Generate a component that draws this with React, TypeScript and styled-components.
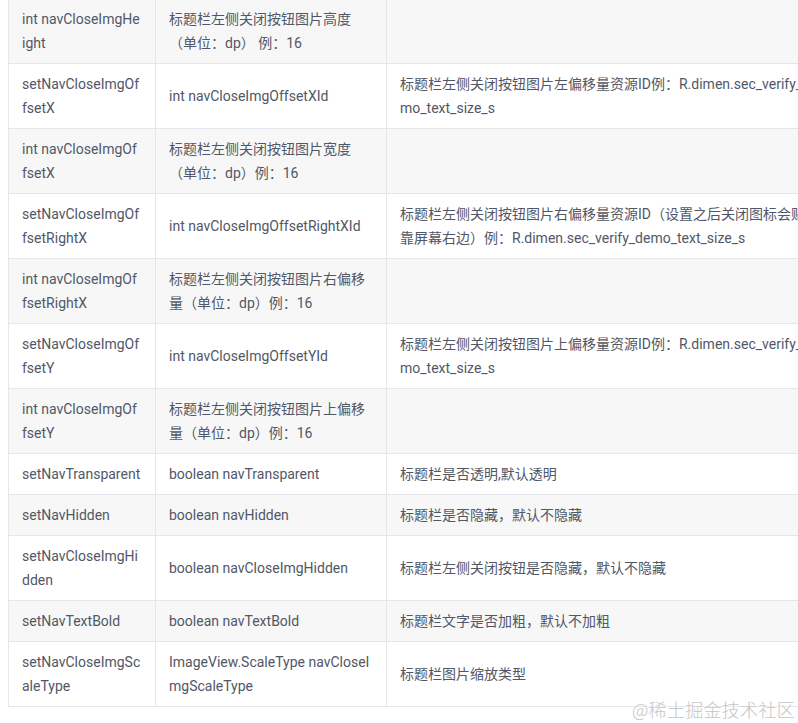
import React from "react";
import styled, { createGlobalStyle } from "styled-components";

const Global = createGlobalStyle`
  html, body {
    margin: 0;
    padding: 0;
    background: #ffffff;
    overflow: hidden;
  }
  body {
    font-family: Roboto, "Noto Sans CJK SC", sans-serif;
  }
`;

const Page = styled.div`
  position: relative;
  width: 798px;
  height: 723px;
  overflow: hidden;
  padding-left: 8px;
  box-sizing: border-box;
`;

const Table = styled.table`
  border-collapse: collapse;
  margin-top: -2px;
  table-layout: fixed;
  width: 826px;
  font-size: 14px;
  line-height: 24px;
  color: #515767;
`;

const Row = styled.tr`
  &:nth-child(odd) {
    background: #f7f7f7;
  }
`;

const Cell = styled.td<{ $w?: number; $pr?: number }>`
  box-sizing: border-box;
  border: 1px solid #e4e6eb;
  padding: 8px ${(p) => p.$pr ?? 13}px 8px 13px;
  vertical-align: middle;
  word-break: break-all;
  white-space: pre-line;
  ${(p) => (p.$w ? `width: ${p.$w}px;` : "")}
`;

const Watermark = styled.div`
  position: absolute;
  right: 3px;
  bottom: 1px;
  font-family: "Noto Sans CJK SC", sans-serif;
  font-size: 18px;
  font-weight: 300;
  color: #c6c6c6;
  letter-spacing: 0.3px;
  text-shadow: 0 0 2px #ffffff, 0 0 2px #ffffff;
`;

const rows: [string, string, string][] = [
  ["int navCloseImgHeight", "标题栏左侧关闭按钮图片高度（单位：dp） 例：16", ""],
  [
    "setNavCloseImgOffsetX",
    "int navCloseImgOffsetXId",
    "标题栏左侧关闭按钮图片左偏移量资源ID例：R.dimen.sec_verify_demo_text_size_s",
  ],
  ["int navCloseImgOffsetX", "标题栏左侧关闭按钮图片宽度（单位：dp）例：16", ""],
  [
    "setNavCloseImgOffsetRightX",
    "int navCloseImgOffsetRightXId",
    "标题栏左侧关闭按钮图片右偏移量资源ID（设置之后关闭图标会贴\n靠屏幕右边）例：R.dimen.sec_verify_demo_text_size_s",
  ],
  ["int navCloseImgOffsetRightX", "标题栏左侧关闭按钮图片右偏移量（单位：dp）例：16", ""],
  [
    "setNavCloseImgOffsetY",
    "int navCloseImgOffsetYId",
    "标题栏左侧关闭按钮图片上偏移量资源ID例：R.dimen.sec_verify_demo_text_size_s",
  ],
  ["int navCloseImgOffsetY", "标题栏左侧关闭按钮图片上偏移量（单位：dp）例：16", ""],
  ["setNavTransparent", "boolean navTransparent", "标题栏是否透明,默认透明"],
  ["setNavHidden", "boolean navHidden", "标题栏是否隐藏，默认不隐藏"],
  ["setNavCloseImgHidden", "boolean navCloseImgHidden", "标题栏左侧关闭按钮是否隐藏，默认不隐藏"],
  ["setNavTextBold", "boolean navTextBold", "标题栏文字是否加粗，默认不加粗"],
  ["setNavCloseImgScaleType", "ImageView.ScaleType navCloseImgScaleType", "标题栏图片缩放类型"],
];

export default function App() {
  return (
    <Page>
      <Global />
      <Table>
        <tbody>
          {rows.map((r, i) => (
            <Row key={i}>
              <Cell $w={147} $pr={14}>
                {r[0]}
              </Cell>
              <Cell $w={231}>{r[1]}</Cell>
              <Cell>{r[2]}</Cell>
            </Row>
          ))}
        </tbody>
      </Table>
      <Watermark>@稀土掘金技术社区</Watermark>
    </Page>
  );
}
